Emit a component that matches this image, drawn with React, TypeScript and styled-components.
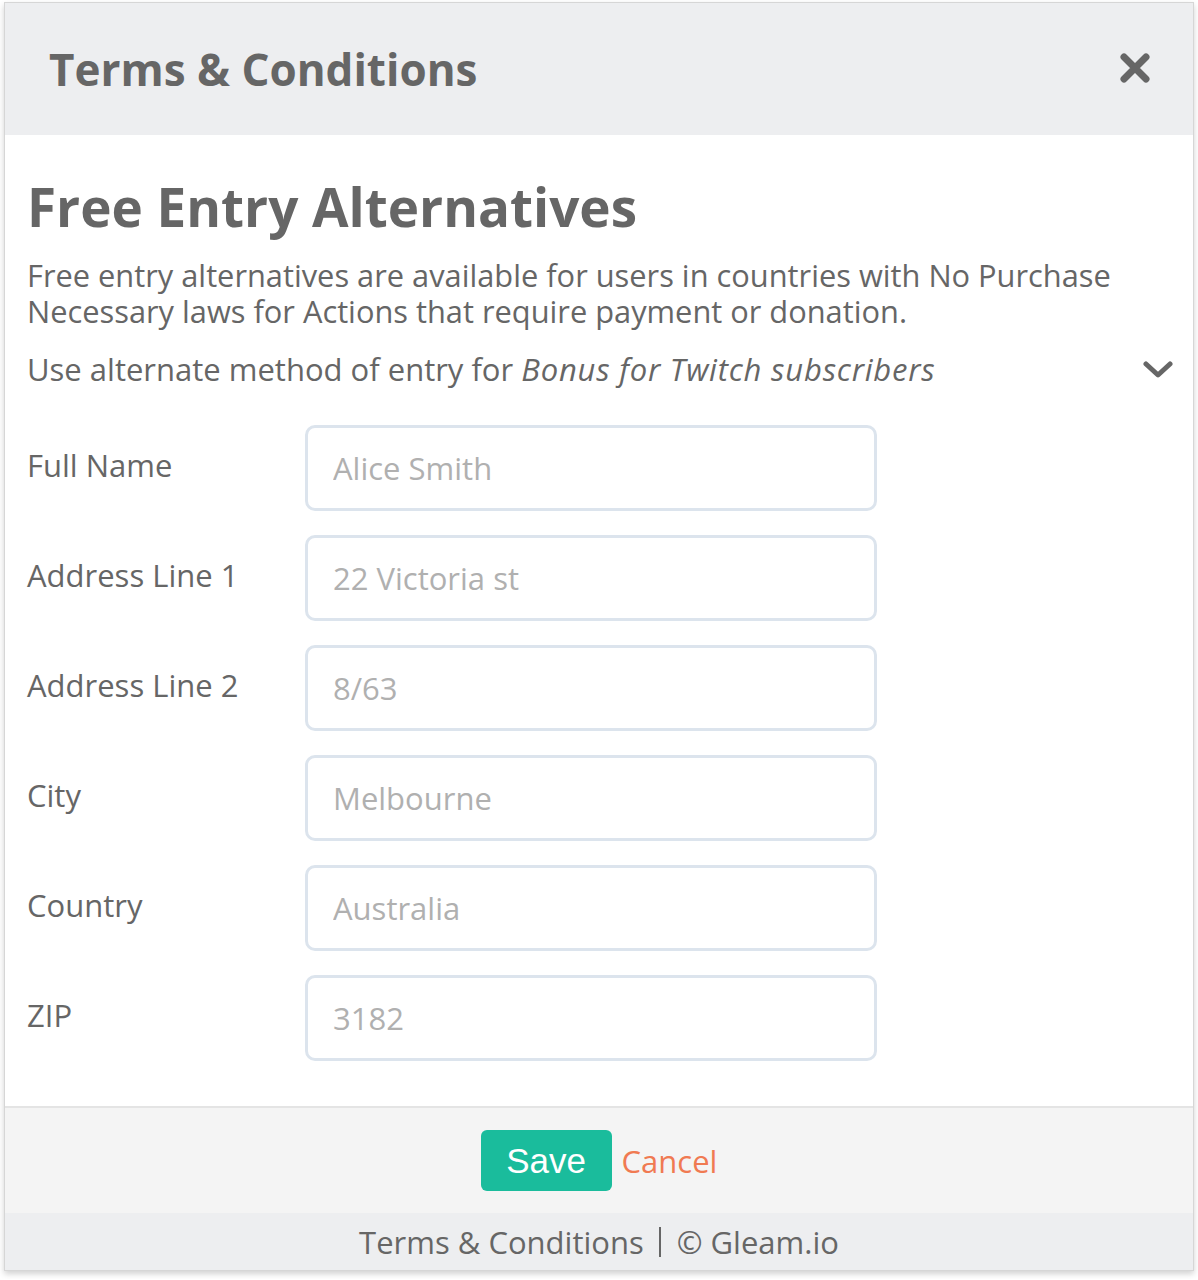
import styled, { createGlobalStyle } from "styled-components";

const GlobalStyle = createGlobalStyle`
    body {
        margin: 0;
        background: #ffffff;
        font-family: "Open Sans", "Noto Sans", sans-serif;
        color: #666666;
    }
    * {
        box-sizing: border-box;
    }
`;

const fields = [
    { label: "Full Name", placeholder: "Alice Smith" },
    { label: "Address Line 1", placeholder: "22 Victoria st" },
    { label: "Address Line 2", placeholder: "8/63" },
    { label: "City", placeholder: "Melbourne" },
    { label: "Country", placeholder: "Australia" },
    { label: "ZIP", placeholder: "3182" },
];

const App = () => {
    return (
        <>
            <GlobalStyle />
            <Page>
                <Modal>
                    <Header>
                        <HeaderTitle>Terms &amp; Conditions</HeaderTitle>
                        <CloseButton aria-label="Close">
                            <svg width="32" height="32" viewBox="0 0 32 32">
                                <path d="M5 5 L27 27 M27 5 L5 27" stroke="#666" strokeWidth="7" strokeLinecap="round" fill="none" />
                            </svg>
                        </CloseButton>
                    </Header>
                    <Body>
                        <Title>Free Entry Alternatives</Title>
                        <Intro>
                            Free entry alternatives are available for users in countries with No Purchase
                            Necessary laws for Actions that require payment or donation.
                        </Intro>
                        <MethodRow>
                            <span>
                                Use alternate method of entry for <em>Bonus for Twitch subscribers</em>
                            </span>
                            <svg width="30" height="18" viewBox="0 0 30 18">
                                <path d="M3 3 L15 14 L27 3" stroke="#666" strokeWidth="5" strokeLinecap="round" strokeLinejoin="round" fill="none" />
                            </svg>
                        </MethodRow>
                        <Form>
                            {fields.map((f) => (
                                <FieldRow key={f.label}>
                                    <Label>{f.label}</Label>
                                    <Input placeholder={f.placeholder} />
                                </FieldRow>
                            ))}
                        </Form>
                    </Body>
                    <Actions>
                        <SaveButton>Save</SaveButton>
                        <CancelLink>Cancel</CancelLink>
                    </Actions>
                    <Footer>
                        Terms &amp; Conditions<Divider />© Gleam.io
                    </Footer>
                </Modal>
            </Page>
        </>
    );
};

export default App;

const Page = styled.div`
    padding: 2px 4px 8px 4px;
`;

const Modal = styled.div`
    width: 1190px;
    border: 1px solid #d6d6d6;
    box-shadow: 0 3px 6px rgba(0, 0, 0, 0.18);
    background: #fff;
`;

const Header = styled.div`
    display: flex;
    justify-content: space-between;
    align-items: center;
    height: 132px;
    padding: 0 42px 0 44px;
    background: #edeef0;
`;

const HeaderTitle = styled.h2`
    margin: 0;
    font-size: 44px;
    font-weight: 700;
    color: #666;
`;

const CloseButton = styled.button`
    border: none;
    background: none;
    padding: 0;
    cursor: pointer;
    display: flex;
    margin-bottom: 2px;
`;

const Body = styled.div`
    padding: 39px 20px 45px 22px;
`;

const Title = styled.h1`
    margin: 0 0 17px 0;
    font-size: 53px;
    line-height: 66px;
    font-weight: 700;
    color: #666;
`;

const Intro = styled.p`
    margin: 0;
    font-size: 30.8px;
    line-height: 36px;
    color: #666;
`;

const MethodRow = styled.div`
    display: flex;
    justify-content: space-between;
    align-items: center;
    margin-top: 22px;
    font-size: 31px;
    line-height: 36px;
    svg {
        margin-top: 2px;
    }
    em {
        font-style: italic;
        letter-spacing: 0.8px;
    }
`;

const Form = styled.div`
    display: flex;
    flex-direction: column;
    gap: 24px;
    margin-top: 38px;
`;

const FieldRow = styled.div`
    display: flex;
    align-items: center;
`;

const Label = styled.label`
    width: 278px;
    flex-shrink: 0;
    font-size: 31px;
    color: #666;
    padding-bottom: 6px;
`;

const Input = styled.input`
    width: 572px;
    height: 86px;
    border: 3px solid #dce4ed;
    border-radius: 10px;
    padding: 0 25px;
    font-family: "Open Sans", "Noto Sans", sans-serif;
    font-size: 31px;
    color: #666;
    outline: none;
    &::placeholder {
        color: #b0b0b0;
    }
`;

const Actions = styled.div`
    display: flex;
    justify-content: center;
    align-items: center;
    gap: 10px;
    height: 107px;
    background: #f4f4f4;
    border-top: 2px solid #e4e4e4;
`;

const SaveButton = styled.button`
    width: 131px;
    height: 61px;
    border: none;
    border-radius: 6px;
    background: #1abc9c;
    color: #fff;
    font-family: "Liberation Sans", Arial, sans-serif;
    font-size: 35px;
    cursor: pointer;
`;

const CancelLink = styled.a`
    font-size: 31px;
    color: #f07a52;
    cursor: pointer;
`;

const Footer = styled.div`
    display: flex;
    justify-content: center;
    align-items: center;
    height: 57px;
    background: #edeef0;
    font-size: 31px;
    color: #666;
    white-space: pre;
`;

const Divider = styled.span`
    display: inline-block;
    width: 2px;
    height: 30px;
    background: #666;
    margin: 0 16px 0 15px;
`;
